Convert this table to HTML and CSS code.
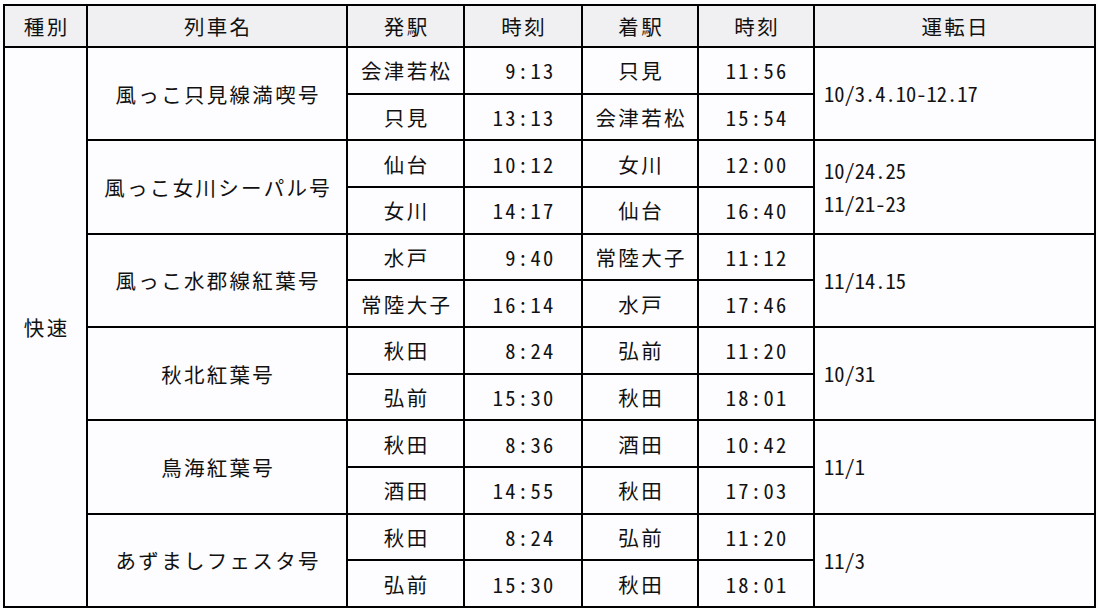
FILE: index.html
```html
<!DOCTYPE html>
<html lang="ja">
<head>
<meta charset="utf-8">
<link rel="stylesheet" href="styles.css">
</head>
<body>
<table class="tt">
<colgroup>
<col class="c-kind"><col class="c-name"><col class="c-st"><col class="c-tm"><col class="c-st2"><col class="c-tm2"><col class="c-day">
</colgroup>
<thead>
<tr class="head"><th>種別</th><th>列車名</th><th>発駅</th><th>時刻</th><th>着駅</th><th>時刻</th><th>運転日</th></tr>
</thead>
<tbody>
<tr><td rowspan="12" class="kind">快速</td><td rowspan="2" class="name">風っこ只見線満喫号</td><td>会津若松</td><td class="tm"> 9:13</td><td>只見</td><td class="tm">11:56</td><td rowspan="2" class="day">10/3.4.10-12.17</td></tr>
<tr><td>只見</td><td class="tm">13:13</td><td>会津若松</td><td class="tm">15:54</td></tr>
<tr><td rowspan="2" class="name">風っこ女川シーパル号</td><td>仙台</td><td class="tm">10:12</td><td>女川</td><td class="tm">12:00</td><td rowspan="2" class="day">10/24.25<br>11/21-23</td></tr>
<tr><td>女川</td><td class="tm">14:17</td><td>仙台</td><td class="tm">16:40</td></tr>
<tr><td rowspan="2" class="name">風っこ水郡線紅葉号</td><td>水戸</td><td class="tm"> 9:40</td><td>常陸大子</td><td class="tm">11:12</td><td rowspan="2" class="day">11/14.15</td></tr>
<tr><td>常陸大子</td><td class="tm">16:14</td><td>水戸</td><td class="tm">17:46</td></tr>
<tr><td rowspan="2" class="name">秋北紅葉号</td><td>秋田</td><td class="tm"> 8:24</td><td>弘前</td><td class="tm">11:20</td><td rowspan="2" class="day">10/31</td></tr>
<tr><td>弘前</td><td class="tm">15:30</td><td>秋田</td><td class="tm">18:01</td></tr>
<tr><td rowspan="2" class="name">鳥海紅葉号</td><td>秋田</td><td class="tm"> 8:36</td><td>酒田</td><td class="tm">10:42</td><td rowspan="2" class="day">11/1</td></tr>
<tr><td>酒田</td><td class="tm">14:55</td><td>秋田</td><td class="tm">17:03</td></tr>
<tr><td rowspan="2" class="name">あずましフェスタ号</td><td>秋田</td><td class="tm"> 8:24</td><td>弘前</td><td class="tm">11:20</td><td rowspan="2" class="day">11/3</td></tr>
<tr><td>弘前</td><td class="tm">15:30</td><td>秋田</td><td class="tm">18:01</td></tr>
</tbody>
</table>
</body>
</html>
```

FILE: styles.css
```css
html, body {
  margin: 0;
  padding: 0;
  background: #fdfcfe;
}

.tt {
  margin: 4px 0 0 3px;
  border-collapse: collapse;
  table-layout: fixed;
  width: 1093px;
  font-family: "Noto Sans CJK JP", "Noto Sans", sans-serif;
  font-size: 20.5px;
  color: #111;
  font-feature-settings: "hwid" 1;
}

.c-kind { width: 83px; }
.c-name { width: 260px; }
.c-st { width: 117px; }
.c-tm { width: 118px; }
.c-st2 { width: 116px; }
.c-tm2 { width: 116px; }
.c-day { width: 281px; }

.tt th,
.tt td {
  border: 2px solid #000;
  padding: 0;
  text-align: center;
  vertical-align: middle;
  letter-spacing: 2.3px;
  text-indent: 2.3px;
  font-weight: 400;
  line-height: 24px;
  white-space: pre;
}

.head {
  height: 42px;
  background: #f0eff1;
}

.tt tbody tr {
  height: 46.67px;
}

.tt td.day {
  text-align: left;
  padding-left: 9px;
  letter-spacing: 0;
  text-indent: 0;
  line-height: 33px;
}
```
